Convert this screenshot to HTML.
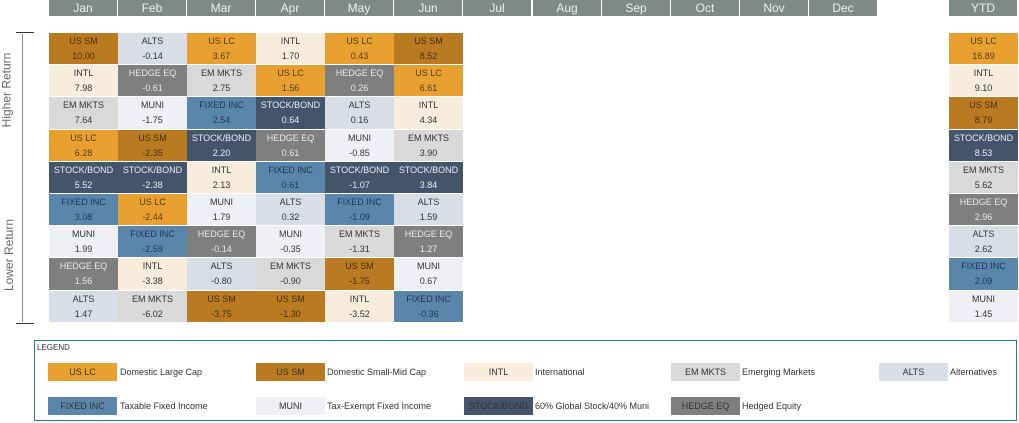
<!DOCTYPE html>
<html><head><meta charset="utf-8"><style>
*{margin:0;padding:0;box-sizing:border-box}
body{width:1019px;height:423px;background:#fff;position:relative;overflow:hidden;font-family:"Liberation Sans",sans-serif}
.h{position:absolute;top:0;height:16px;width:68px;background:#7f8a84;color:#eef0ee;font-size:12px;text-align:center;line-height:16px}
.col{position:absolute;top:33px;width:69px}
.c{height:32.2px;border-bottom:1px solid #fff;font-size:9px;text-align:center;line-height:15px;padding-top:1px;color:#333}
.lc{background:#e8a030;color:#5a3a10}
.sm{background:#b97a22;color:#4a2e08}
.in{background:#f8ecdd}
.em{background:#d9d9d9}
.al{background:#d9dee6}
.he{background:#7f7f7f;color:#e8e8e8}
.mu{background:#eef0f6}
.fi{background:#5b86ac;color:#1f3550}
.sb{background:#44546a;color:#e8eef4}
.leg{position:absolute;left:34px;top:340px;width:983px;height:81px;border:1px solid #1f7f8f}
.sw{position:absolute;width:69px;height:18px;font-size:9px;text-align:center;line-height:18px;color:#333}
.lt{position:absolute;font-size:9px;color:#333;line-height:18px}
.ax{position:absolute;font-size:12px;color:#666;transform:rotate(-90deg);white-space:nowrap}
</style></head><body>
<div class="h" style="left:49px">Jan</div><div class="h" style="left:118px">Feb</div><div class="h" style="left:187px">Mar</div><div class="h" style="left:256px">Apr</div><div class="h" style="left:325px">May</div><div class="h" style="left:394px">Jun</div><div class="h" style="left:463px">Jul</div><div class="h" style="left:533px">Aug</div><div class="h" style="left:602px">Sep</div><div class="h" style="left:671px">Oct</div><div class="h" style="left:740px">Nov</div><div class="h" style="left:809px">Dec</div><div class="h" style="left:949px">YTD</div>

<div style="position:absolute;left:16px;top:32px;width:18px;height:1px;background:#333"></div>
<div style="position:absolute;left:16px;top:323px;width:18px;height:1px;background:#333"></div>
<div style="position:absolute;left:22px;top:34px;width:1px;height:288px;background:#888"></div>
<div class="ax" style="left:-31px;top:83px">Higher Return</div>
<div class="ax" style="left:-27px;top:248px">Lower Return</div>

<div class="col" style="left:49px">
<div class="c sm">US SM<br>10.00</div><div class="c in">INTL<br>7.98</div><div class="c em">EM MKTS<br>7.64</div><div class="c lc">US LC<br>6.28</div><div class="c sb">STOCK/BOND<br>5.52</div><div class="c fi">FIXED INC<br>3.08</div><div class="c mu">MUNI<br>1.99</div><div class="c he">HEDGE EQ<br>1.56</div><div class="c al">ALTS<br>1.47</div></div>
<div class="col" style="left:118px">
<div class="c al">ALTS<br>-0.14</div><div class="c he">HEDGE EQ<br>-0.61</div><div class="c mu">MUNI<br>-1.75</div><div class="c sm">US SM<br>-2.35</div><div class="c sb">STOCK/BOND<br>-2.38</div><div class="c lc">US LC<br>-2.44</div><div class="c fi">FIXED INC<br>-2.59</div><div class="c in">INTL<br>-3.38</div><div class="c em">EM MKTS<br>-6.02</div></div>
<div class="col" style="left:187px">
<div class="c lc">US LC<br>3.67</div><div class="c em">EM MKTS<br>2.75</div><div class="c fi">FIXED INC<br>2.54</div><div class="c sb">STOCK/BOND<br>2.20</div><div class="c in">INTL<br>2.13</div><div class="c mu">MUNI<br>1.79</div><div class="c he">HEDGE EQ<br>-0.14</div><div class="c al">ALTS<br>-0.80</div><div class="c sm">US SM<br>-3.75</div></div>
<div class="col" style="left:256px">
<div class="c in">INTL<br>1.70</div><div class="c lc">US LC<br>1.56</div><div class="c sb">STOCK/BOND<br>0.64</div><div class="c he">HEDGE EQ<br>0.61</div><div class="c fi">FIXED INC<br>0.61</div><div class="c al">ALTS<br>0.32</div><div class="c mu">MUNI<br>-0.35</div><div class="c em">EM MKTS<br>-0.90</div><div class="c sm">US SM<br>-1.30</div></div>
<div class="col" style="left:325px">
<div class="c lc">US LC<br>0.43</div><div class="c he">HEDGE EQ<br>0.26</div><div class="c al">ALTS<br>0.16</div><div class="c mu">MUNI<br>-0.85</div><div class="c sb">STOCK/BOND<br>-1.07</div><div class="c fi">FIXED INC<br>-1.09</div><div class="c em">EM MKTS<br>-1.31</div><div class="c sm">US SM<br>-1.75</div><div class="c in">INTL<br>-3.52</div></div>
<div class="col" style="left:394px">
<div class="c sm">US SM<br>8.52</div><div class="c lc">US LC<br>6.61</div><div class="c in">INTL<br>4.34</div><div class="c em">EM MKTS<br>3.90</div><div class="c sb">STOCK/BOND<br>3.84</div><div class="c al">ALTS<br>1.59</div><div class="c he">HEDGE EQ<br>1.27</div><div class="c mu">MUNI<br>0.67</div><div class="c fi">FIXED INC<br>-0.36</div></div>
<div class="col" style="left:949px">
<div class="c lc">US LC<br>16.89</div><div class="c in">INTL<br>9.10</div><div class="c sm">US SM<br>8.79</div><div class="c sb">STOCK/BOND<br>8.53</div><div class="c em">EM MKTS<br>5.62</div><div class="c he">HEDGE EQ<br>2.96</div><div class="c al">ALTS<br>2.62</div><div class="c fi">FIXED INC<br>2.09</div><div class="c mu">MUNI<br>1.45</div></div>

<div class="leg">
<div style="position:absolute;left:2px;top:2px;font-size:8px;color:#333">LEGEND</div>
</div>
<div class="sw lc" style="left:48px;top:363px">US LC</div><div class="lt" style="left:120px;top:363px">Domestic Large Cap</div>
<div class="sw sm" style="left:256px;top:363px">US SM</div><div class="lt" style="left:327px;top:363px">Domestic Small-Mid Cap</div>
<div class="sw in" style="left:464px;top:363px">INTL</div><div class="lt" style="left:535px;top:363px">International</div>
<div class="sw em" style="left:671px;top:363px">EM MKTS</div><div class="lt" style="left:742px;top:363px">Emerging Markets</div>
<div class="sw al" style="left:879px;top:363px">ALTS</div><div class="lt" style="left:950px;top:363px">Alternatives</div>
<div class="sw fi" style="left:48px;top:397px">FIXED INC</div><div class="lt" style="left:120px;top:397px">Taxable Fixed Income</div>
<div class="sw mu" style="left:256px;top:397px">MUNI</div><div class="lt" style="left:327px;top:397px">Tax-Exempt Fixed Income</div>
<div class="sw sb" style="left:464px;top:397px">STOCK/BOND</div><div class="lt" style="left:535px;top:397px">60% Global Stock/40% Muni</div>
<div class="sw he" style="left:671px;top:397px">HEDGE EQ</div><div class="lt" style="left:742px;top:397px">Hedged Equity</div>
</body></html>
